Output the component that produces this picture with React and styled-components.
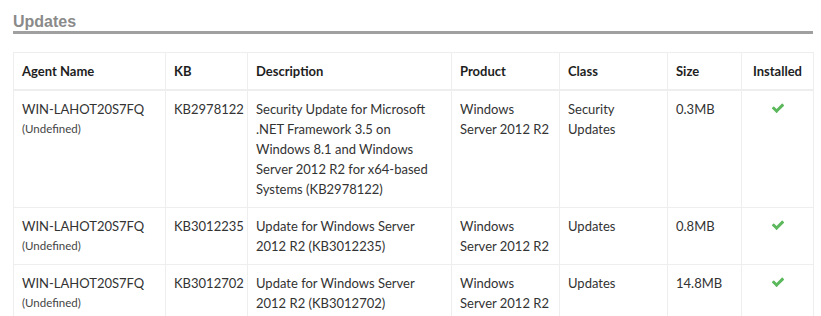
import React from "react";
import styled, { createGlobalStyle } from "styled-components";

const Global = createGlobalStyle`
  html, body { margin: 0; padding: 0; background: #fff; }
  body { font-family: "Lato", "Noto Sans", sans-serif; }
`;

const Page = styled.div`
  padding: 12px 8px 0 13px;
  width: 800px;
`;

const Heading = styled.h2`
  margin: 0;
  font-family: "Liberation Sans", Arial, sans-serif;
  font-size: 16px;
  font-weight: bold;
  color: #8a8a8a;
  line-height: 19px;
  border-bottom: 3px solid #a0a0a0;
`;

const Table = styled.table`
  margin-top: 18px;
  width: 800px;
  border-collapse: collapse;
  table-layout: fixed;
  font-family: "Lato", "Noto Sans", sans-serif;
  font-size: 13px;
  line-height: 20px;
  color: #333;
`;

const Th = styled.th`
  text-align: ${(p) => p.$align || "left"};
  font-weight: bold;
  padding: 8px;
  border: 1px solid #eeeeee;
  border-bottom: 2px solid #eeeeee;
  color: #1e1e1e;
`;

const Td = styled.td`
  vertical-align: top;
  text-align: ${(p) => p.$align || "left"};
  padding: 8px;
  border: 1px solid #eeeeee;
`;

const Sub = styled.div`
  font-size: 11.5px;
  line-height: 20px;
  color: #444;
`;

const Check = styled.svg`
  width: 14px;
  height: 14px;
  margin-top: 2px;
  fill: #5cb85c;
`;

const cols = [152, 82, 204, 108, 108, 74, 72];

const rows = [
  {
    kb: "KB2978122",
    desc: "Security Update for Microsoft .NET Framework 3.5 on Windows 8.1 and Windows Server 2012 R2 for x64-based Systems (KB2978122)",
    cls: "Security Updates",
    size: "0.3MB",
  },
  {
    kb: "KB3012235",
    desc: "Update for Windows Server 2012 R2 (KB3012235)",
    cls: "Updates",
    size: "0.8MB",
  },
  {
    kb: "KB3012702",
    desc: "Update for Windows Server 2012 R2 (KB3012702)",
    cls: "Updates",
    size: "14.8MB",
  },
];

const CheckIcon = () => (
  <Check viewBox="0 0 1792 1792">
    <path d="M1671 566q0 40-28 68l-724 724-136 136q-28 28-68 28t-68-28l-136-136-362-362q-28-28-28-68t28-68l136-136q28-28 68-28t68 28l294 295 656-657q28-28 68-28t68 28l136 136q28 28 28 68z" />
  </Check>
);

export default function App() {
  return (
    <>
      <Global />
      <Page>
        <Heading>Updates</Heading>
        <Table>
          <colgroup>
            {cols.map((w, i) => (
              <col key={i} style={{ width: w }} />
            ))}
          </colgroup>
          <thead>
            <tr>
              <Th>Agent Name</Th>
              <Th>KB</Th>
              <Th>Description</Th>
              <Th>Product</Th>
              <Th>Class</Th>
              <Th>Size</Th>
              <Th $align="center">Installed</Th>
            </tr>
          </thead>
          <tbody>
            {rows.map((r) => (
              <tr key={r.kb}>
                <Td>
                  WIN-LAHOT20S7FQ
                  <Sub>(Undefined)</Sub>
                </Td>
                <Td>{r.kb}</Td>
                <Td>{r.desc}</Td>
                <Td>Windows Server 2012 R2</Td>
                <Td>{r.cls}</Td>
                <Td>{r.size}</Td>
                <Td $align="center">
                  <CheckIcon />
                </Td>
              </tr>
            ))}
          </tbody>
        </Table>
      </Page>
    </>
  );
}
